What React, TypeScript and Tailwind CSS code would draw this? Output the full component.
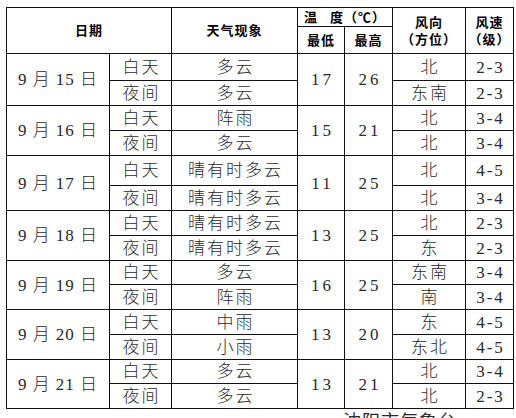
const rows = [
  { date: '9 月 15 日', lo: '17', hi: '26', day: ['多云', '北', '2-3'], night: ['多云', '东南', '2-3'], h: [27, 25] },
  { date: '9 月 16 日', lo: '15', hi: '21', day: ['阵雨', '北', '3-4'], night: ['多云', '北', '3-4'], h: [25, 25] },
  { date: '9 月 17 日', lo: '11', hi: '25', day: ['晴有时多云', '北', '4-5'], night: ['晴有时多云', '北', '3-4'], h: [30, 25] },
  { date: '9 月 18 日', lo: '13', hi: '25', day: ['晴有时多云', '北', '2-3'], night: ['晴有时多云', '东', '2-3'], h: [25, 25] },
  { date: '9 月 19 日', lo: '16', hi: '25', day: ['多云', '东南', '3-4'], night: ['阵雨', '南', '3-4'], h: [24, 25] },
  { date: '9 月 20 日', lo: '13', hi: '20', day: ['中雨', '东', '4-5'], night: ['小雨', '东北', '4-5'], h: [25, 25] },
  { date: '9 月 21 日', lo: '13', hi: '21', day: ['多云', '北', '3-4'], night: ['多云', '北', '2-3'], h: [24, 25] },
];

const cell = 'border border-[#111] p-0 text-center align-middle';
const head = `${cell} text-[13px] font-bold text-black tracking-[1px] leading-[17px]`;

export default function App() {
  return (
    <div
      className="w-[516px] h-[418px] overflow-hidden bg-white pl-[6px] pt-[7px] text-[#2a2a2a]"
      style={{ fontFamily: '"Liberation Serif", "Noto Sans CJK SC", serif' }}
    >
      <table className="w-[507px] table-fixed border-collapse text-[17px] font-light leading-none">
        <colgroup>
          <col className="w-[103px]" />
          <col className="w-[62px]" />
          <col className="w-[126px]" />
          <col className="w-[47px]" />
          <col className="w-[48px]" />
          <col className="w-[73px]" />
          <col className="w-[48px]" />
        </colgroup>
        <thead>
          <tr className="h-[19px]">
            <th colSpan={2} rowSpan={2} className={head}>日期</th>
            <th rowSpan={2} className={head}>天气现象</th>
            <th colSpan={2} className={head}>
              <span className="mr-[12px]">温</span>度（℃）
            </th>
            <th rowSpan={2} className={head}>
              风向
              <br />
              （方位）
            </th>
            <th rowSpan={2} className={head}>
              风速
              <br />
              （级）
            </th>
          </tr>
          <tr className="h-[27px]">
            <th className={head}>最低</th>
            <th className={head}>最高</th>
          </tr>
        </thead>
        <tbody>
          {rows.map((r) => (
            <>
              <tr key={r.date + 'd'} style={{ height: r.h[0] }}>
                <td rowSpan={2} className={`${cell} tracking-[1px] whitespace-pre`}>{r.date}</td>
                <td className={`${cell} tracking-[2px] pl-[2px]`}>白天</td>
                <td className={`${cell} tracking-[2px] pl-[2px]`}>{r.day[0]}</td>
                <td rowSpan={2} className={`${cell} tracking-[3px] pl-[3px]`}>{r.lo}</td>
                <td rowSpan={2} className={`${cell} tracking-[3px] pl-[3px]`}>{r.hi}</td>
                <td className={`${cell} tracking-[2px] pl-[2px]`}>{r.day[1]}</td>
                <td className={`${cell} tracking-[2px] pl-[2px]`}>{r.day[2]}</td>
              </tr>
              <tr key={r.date + 'n'} style={{ height: r.h[1] }}>
                <td className={`${cell} tracking-[2px] pl-[2px]`}>夜间</td>
                <td className={`${cell} tracking-[2px] pl-[2px]`}>{r.night[0]}</td>
                <td className={`${cell} tracking-[2px] pl-[2px]`}>{r.night[1]}</td>
                <td className={`${cell} tracking-[2px] pl-[2px]`}>{r.night[2]}</td>
              </tr>
            </>
          ))}
        </tbody>
      </table>
      <div className="pl-[337px] pt-[4px] text-[18px] tracking-[1px] leading-none">沈阳市气象台</div>
    </div>
  );
}
